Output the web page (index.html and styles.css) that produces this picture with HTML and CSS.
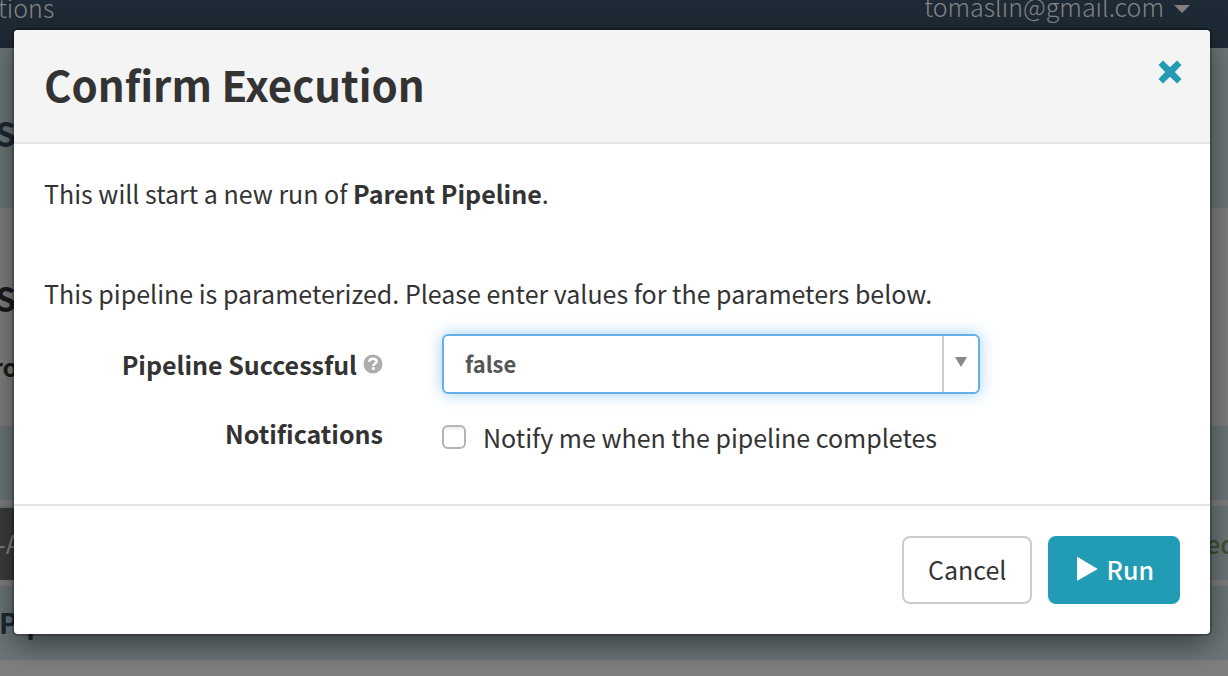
FILE: index.html
```html
<!DOCTYPE html>
<html lang="en">
<head>
<meta charset="utf-8">
<meta name="viewport" content="width=device-width, initial-scale=1">
<title>Confirm Execution</title>
<link rel="stylesheet" href="styles.css">
</head>
<body>
<div class="page" aria-hidden="true">
  <div class="navbar"><span>tions</span><span class="user">tomaslin@gmail.com <i class="caret"></i></span></div>
  <div class="band band-title"><b class="big">S</b></div>
  <div class="plain"><b class="big dark">S</b><b class="dark small">ro</b></div>
  <div class="band band-row"></div>
  <div class="band band-row band-status"><span class="stage">-A</span><span class="status">ted</span></div>
  <div class="band band-row band-name"><b>Pipeline</b></div>
</div>
<div class="overlay">
  <form class="modal" role="dialog" aria-modal="true" aria-labelledby="title">
    <header class="modal-header">
      <h1 class="modal-title" id="title">Confirm Execution</h1>
      <button class="close" type="button" aria-label="Close">
        <svg width="24" height="24" viewBox="0 0 24 24"><path d="M5 0.5L12 7.2L19 0.5L23.5 5L16.8 12L23.5 19L19 23.5L12 16.8L5 23.5L0.5 19L7.2 12L0.5 5Z" fill="#229cb4"/></svg>
      </button>
    </header>
    <div class="modal-body">
      <p class="lead">This will start a new run of <b>Parent Pipeline</b>.</p>
      <p class="hint">This pipeline is parameterized. Please enter values for the parameters below.</p>
      <div class="field">
        <div class="label">
          <label for="success">Pipeline Successful</label>
          <svg class="help" width="20" height="20" viewBox="0 0 20 20"><circle cx="10" cy="10" r="9.5" fill="#adadad"/><path d="M6.3 7.8C6.4 5.500 8 4.700 10 4.700C12.200 4.700 13.500 5.900 13.500 7.500C13.500 9.600 10.300 9.500 10.300 12" fill="none" stroke="#fff" stroke-width="2.600"/><path d="M8.800 13.200h3v2.600h-3z" fill="#fff"/></svg>
        </div>
        <div class="select">
          <select id="success"><option>false</option><option>true</option></select>
          <span class="arrow"><svg width="12" height="10" viewBox="0 0 12 10"><path d="M0 0H12L6 10Z" fill="#888"/></svg></span>
        </div>
      </div>
      <div class="field field-notify">
        <div class="label">Notifications</div>
        <label class="check"><input type="checkbox">Notify me when the pipeline completes</label>
      </div>
    </div>
    <footer class="modal-footer">
      <button class="btn" type="button">Cancel</button>
      <button class="btn btn-primary" type="submit"><svg width="22" height="26" viewBox="0 0 22 26"><path d="M1 1.500V24.500Q1 25 1.600 24.600L21 13.500Q21.500 13 21 12.500L1.600 0.900Q1 0.600 1 1.500Z" fill="#fff"/></svg>Run</button>
    </footer>
  </form>
</div>
</body>
</html>
```
FILE: styles.css
```css
* { box-sizing: border-box; }
body {
  margin: 0;
  min-height: 100vh;
  overflow: hidden;
  background: #7f7f7f;
  color: #333;
  font: 25px/40px "Noto Sans CJK SC", "Open Sans", sans-serif;
}
button, select, input { font: inherit; color: inherit; margin: 0; }
h1, p { margin: 0; }

.navbar {
  display: flex;
  justify-content: space-between;
  height: 48px;
  padding-right: 38px;
  background: #1e2a35;
  color: #858687;
  font-weight: 300;
  line-height: 14px;
}
.navbar > span:first-child { margin-left: -2px; }
.user { display: flex; align-items: center; gap: 10px; height: 18px; line-height: 18px; padding-bottom: 6px; }
.caret {
  margin-top: 6px;
  border: 8px solid transparent;
  border-top-color: #858081;
  border-bottom: 0;
}
.big { margin-left: -5px; font-size: 34px; }
.dark { color: #1a1a1a; }
.small { margin-left: -8px; }
.band { display: flex; align-items: center; background: #6c7678; color: #1b2934; }
.band-title { height: 160px; }
.band-title .big { margin-top: 10px; }
.plain { display: flex; flex-direction: column; height: 218px; padding-top: 70px; }
.plain .small { margin-top: 28px; }
.band-row { height: 74px; margin-bottom: 6px; }
.band-status { justify-content: space-between; }
.band-name b { margin-left: -1px; font-size: 28px; line-height: 36px; padding-bottom: 2px; }
.stage { height: 72px; width: 40px; background: #3c3c3c; color: #858585; line-height: 70px; margin-top: 2px; text-indent: -3px; }
.status { margin-right: -8px; color: #42512f; font-weight: 500; }

.overlay { position: absolute; inset: 0; padding: 30px 18px 0 14px; }
.modal {
  background: #fff;
  border-radius: 4px;
  box-shadow: 0 0 0 2px rgba(0, 0, 0, .2), 0 10px 30px rgba(0, 0, 0, .5);
}
.modal-header {
  display: flex;
  justify-content: space-between;
  align-items: flex-start;
  padding: 30px 28px 34px 30px;
  background: #f4f4f4;
  border-bottom: 2px solid #e4e4e4;
  border-radius: 4px 4px 0 0;
}
.modal-title { font-size: 42px; line-height: 48px; font-weight: 700; }
.close { display: flex; padding: 0; border: 0; background: none; }

.modal-body { padding: 29px 30px 47px; }
.lead { margin-bottom: 60px; }
.hint { margin-bottom: 21px; }
.field { display: grid; grid-template-columns: 339fr 738fr; column-gap: 59px; align-items: center; }
.field-notify { margin-top: 19px; align-items: start; }
.label { display: flex; justify-content: flex-end; align-items: center; gap: 6px; font-weight: 700; }
.select {
  display: grid;
  max-width: 538px;
  height: 60px;
  border: 2px solid #66afe9;
  border-radius: 6px;
  box-shadow: 0 0 16px rgba(102, 175, 233, .6);
}
.select select {
  grid-area: 1 / 1;
  appearance: none;
  padding: 0 56px 2px 21px;
  border: 0;
  outline: 0;
  background: none;
  color: #555;
  font-size: 22px;
  font-weight: 700;
}
.arrow {
  grid-area: 1 / 1;
  justify-self: end;
  display: flex;
  align-items: center;
  justify-content: center;
  width: 36px;
  padding-bottom: 4px;
  border-left: 2px solid #ccc;
  pointer-events: none;
}
.check { display: flex; align-items: center; gap: 17px; padding-top: 4px; }
.check input {
  appearance: none;
  width: 24px;
  height: 24px;
  border: 2px solid #b4b4b4;
  border-radius: 6px;
  background: linear-gradient(#eee, #fff 5px);
}

.modal-footer {
  display: flex;
  justify-content: flex-end;
  gap: 16px;
  padding: 30px;
  border-top: 2px solid #e4e4e4;
}
.btn {
  display: flex;
  align-items: center;
  gap: 8px;
  height: 68px;
  padding: 0 24px 2px;
  border: 2px solid #ccc;
  border-radius: 8px;
  background: #fff;
}
.btn-primary { padding: 0 24px 2px 26px; border-color: #229cb4; background: #229cb4; color: #fff; font-weight: 500; }
```
